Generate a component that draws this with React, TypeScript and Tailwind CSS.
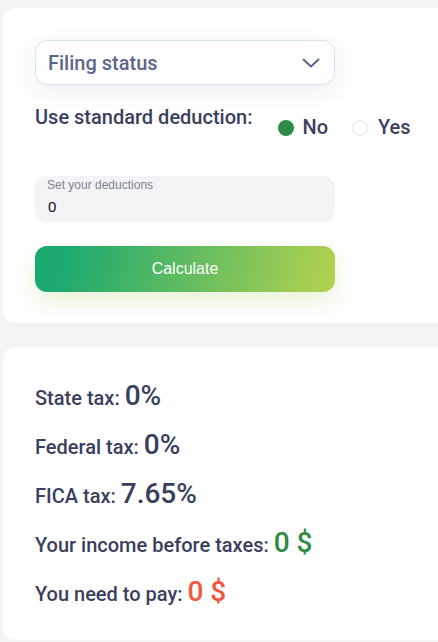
import React, { useState } from "react";

const rows = [
  { label: "State tax:", value: "0%", color: "text-[#3a3f5e]" },
  { label: "Federal tax:", value: "0%", color: "text-[#3a3f5e]" },
  { label: "FICA tax:", value: "7.65%", color: "text-[#3a3f5e]" },
  { label: "Your income before taxes:", value: "0 $", color: "text-[#2e8b45]" },
  { label: "You need to pay:", value: "0 $", color: "text-[#f4553c]" },
];

export default function App() {
  const [useStandard, setUseStandard] = useState(false);

  return (
    <div className="h-[642px] bg-[#f3f4f6] pl-[3px] pt-[8px] flex flex-col gap-[24px] font-['Roboto',sans-serif] overflow-hidden">
      {/* Form card */}
      <div className="bg-white rounded-l-[12px] pl-[32px] pt-[32px] pb-[31px]">
        <button className="w-[300px] h-[45px] flex items-center justify-between px-[12px] rounded-[12px] border border-[#d8e2f0] bg-white shadow-[0_6px_24px_rgba(30,40,80,0.07)]">
          <span className="text-[20px] font-medium text-[#5b6789]">Filing status</span>
          <svg width="18" height="10" viewBox="0 0 18 10" fill="none" className="mr-[2px]">
            <path d="M1.5 1.5L9 8.5L16.5 1.5" stroke="#5b6789" strokeWidth="2" strokeLinecap="round" strokeLinejoin="round" />
          </svg>
        </button>

        <div className="flex items-start mt-[19px] whitespace-nowrap">
          <span className="shrink-0 text-[20px] font-medium text-[#3a3f5e] leading-[27px]">Use standard deduction:</span>
          <div className="flex items-center mt-[10px] ml-[26px] gap-[24px]">
            <label className="flex items-center gap-[8px] cursor-pointer" onClick={() => setUseStandard(false)}>
              <span className={!useStandard ? "w-[16px] h-[16px] rounded-full bg-[#2e8b45]" : "w-[16px] h-[16px] rounded-full border border-[#d6e2f0] bg-white"} />
              <span className="text-[20px] font-medium text-[#3a3f5e] leading-[27px]">No</span>
            </label>
            <label className="flex items-center gap-[10px] cursor-pointer" onClick={() => setUseStandard(true)}>
              <span className={useStandard ? "w-[16px] h-[16px] rounded-full bg-[#2e8b45]" : "w-[16px] h-[16px] rounded-full border border-[#d6e2f0] bg-white"} />
              <span className="text-[20px] font-medium text-[#3a3f5e] leading-[27px]">Yes</span>
            </label>
          </div>
        </div>

        <div className="mt-[35px] w-[300px] h-[46px] rounded-[12px] bg-[#f3f4f6] px-[12px] font-['Liberation_Sans',Arial,sans-serif]">
          <div className="text-[12px] text-[#7d8290] leading-[16px] pt-[1px]">Set your deductions</div>
          <div className="text-[15px] text-[#111] leading-[20px] pl-[1px] mt-[4px]">0</div>
        </div>

        <button className="mt-[24px] w-[300px] h-[46px] rounded-[12px] bg-[linear-gradient(105deg,#1ba970_10%,#b5d24e_100%)] text-white text-[16px] font-['Liberation_Sans',Arial,sans-serif] shadow-[0_10px_20px_rgba(150,200,80,0.2)]">
          Calculate
        </button>
      </div>

      {/* Results card */}
      <div className="bg-white rounded-l-[12px] px-[32px] pt-[31px] h-[293px] shrink-0 flex flex-col gap-[9px]">
        {rows.map((r) => (
          <p key={r.label} className="leading-[36px] text-[#3a3f5e] whitespace-nowrap">
            <span className="text-[20px] font-medium">{r.label} </span>
            <span className={`text-[28px] font-medium ${r.color}`}>{r.value}</span>
          </p>
        ))}
      </div>
    </div>
  );
}
